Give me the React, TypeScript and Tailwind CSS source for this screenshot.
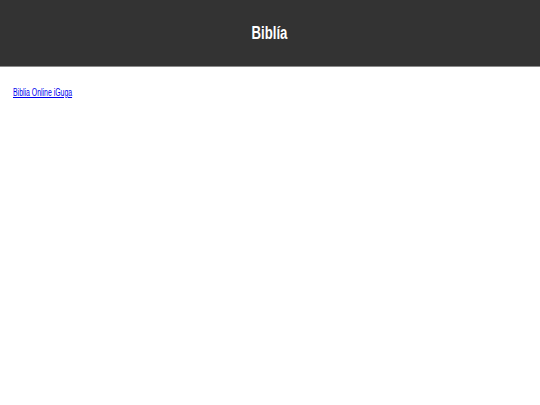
export default function App() {
  return (
    <div className="min-h-screen bg-white font-['Liberation_Sans',Arial,sans-serif]">
      <header className="flex h-[67px] items-center justify-center border-b border-[#8a8a8a] bg-[#333333]">
        <h1 className="inline-block origin-center scale-x-[0.73] text-[18px] font-bold text-white">Biblía</h1>
      </header>
      <main className="px-[13px] pt-[12px]">
        <a href="#" className="inline-block origin-left scale-x-[0.69] text-[10px] text-[#0000ee] underline">
          Biblia Online iGuga
        </a>
      </main>
    </div>
  );
}
